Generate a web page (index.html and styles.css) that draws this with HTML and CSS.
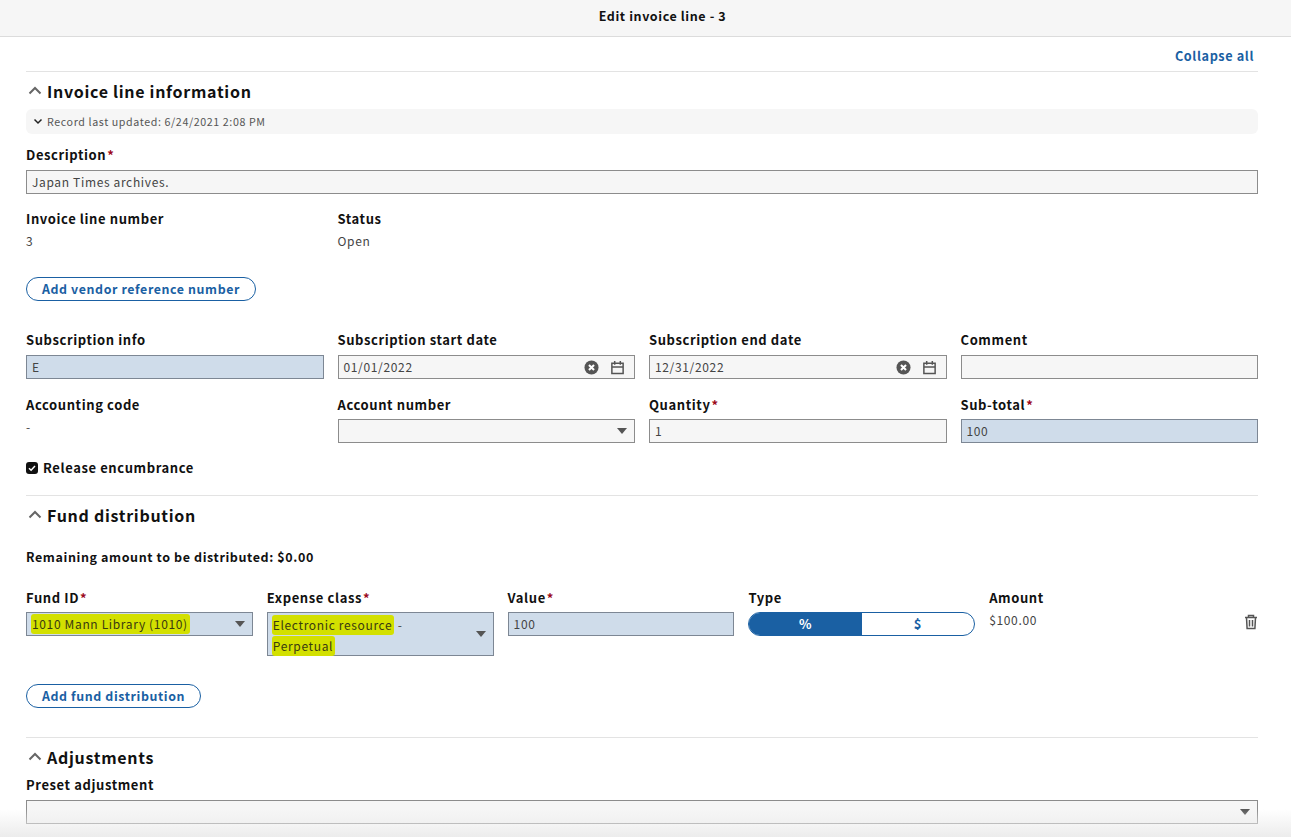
FILE: index.html
```html
<!DOCTYPE html>
<html lang="en">
<head>
<meta charset="utf-8">
<title>Edit invoice line - 3</title>
<link rel="stylesheet" href="styles.css">
</head>
<body>
<header class="topbar">Edit invoice line - 3</header>
<main class="content">
  <div class="collapse-row"><a class="link">Collapse all</a></div>

  <section class="section first">
    <h2 class="sec-title"><svg class="chev" viewBox="0 0 14 9"><path d="M1.500 7.500 7 2l5.500 5.500"/></svg>Invoice line information</h2>
    <div class="meta"><svg class="meta-chev" viewBox="0 0 10 7"><path d="M1.500 1.500 5 5l3.500-3.500"/></svg>Record last updated: 6/24/2021 2:08 PM</div>
    <div class="field desc">
      <label class="lbl">Description<span class="req">*</span></label>
      <div class="input">Japan Times archives.</div>
    </div>
    <div class="grid4 info-row">
      <div class="field"><label class="lbl">Invoice line number</label><div class="value">3</div></div>
      <div class="field"><label class="lbl">Status</label><div class="value">Open</div></div>
    </div>
    <button class="pill vendor">Add vendor reference number</button>
    <div class="grid4 sub-row">
      <div class="field"><label class="lbl">Subscription info</label><div class="input filled">E</div></div>
      <div class="field"><label class="lbl">Subscription start date</label>
        <div class="input date"><span class="grow">01/01/2022</span>
          <svg class="ic" viewBox="0 0 16 16"><circle cx="8" cy="8" r="7.500" fill="#555"/><path d="M5.300 5.300l5.400 5.400m0-5.400l-5.400 5.400" stroke="#fff" stroke-width="2.200" fill="none"/></svg>
          <svg class="ic cal" viewBox="0 0 16 16"><path d="M2 3.500h12v11H2zM2 7.500h12M5 1v4M11 1v4" stroke="#555" stroke-width="1.600" fill="none"/></svg>
        </div></div>
      <div class="field"><label class="lbl">Subscription end date</label>
        <div class="input date"><span class="grow">12/31/2022</span>
          <svg class="ic" viewBox="0 0 16 16"><circle cx="8" cy="8" r="7.500" fill="#555"/><path d="M5.300 5.300l5.400 5.400m0-5.400l-5.400 5.400" stroke="#fff" stroke-width="2.200" fill="none"/></svg>
          <svg class="ic cal" viewBox="0 0 16 16"><path d="M2 3.500h12v11H2zM2 7.500h12M5 1v4M11 1v4" stroke="#555" stroke-width="1.600" fill="none"/></svg>
        </div></div>
      <div class="field"><label class="lbl">Comment</label><div class="input"></div></div>
    </div>
    <div class="grid4 acc-row">
      <div class="field"><label class="lbl">Accounting code</label><div class="value">-</div></div>
      <div class="field"><label class="lbl">Account number</label><div class="input select"><span class="grow"></span><i class="caret"></i></div></div>
      <div class="field"><label class="lbl">Quantity<span class="req">*</span></label><div class="input">1</div></div>
      <div class="field"><label class="lbl">Sub-total<span class="req">*</span></label><div class="input filled">100</div></div>
    </div>
    <label class="check"><span class="box"><svg viewBox="0 0 12 12"><path d="M3 6.200 5.100 8.200 9 3.900"/></svg></span>Release encumbrance</label>
  </section>

  <section class="section fund">
    <h2 class="sec-title"><svg class="chev" viewBox="0 0 14 9"><path d="M1.500 7.500 7 2l5.500 5.500"/></svg>Fund distribution</h2>
    <p class="remain">Remaining amount to be distributed: $0.00</p>
    <div class="fund-row">
      <div class="field"><label class="lbl">Fund ID<span class="req">*</span></label>
        <div class="input filled select"><span class="grow"><mark class="hl">1010 Mann Library (1010)</mark></span><i class="caret"></i></div></div>
      <div class="field"><label class="lbl">Expense class<span class="req">*</span></label>
        <div class="input filled select tall"><span class="grow"><mark class="hl">Electronic resource</mark> -<br><mark class="hl">Perpetual</mark></span><i class="caret"></i></div></div>
      <div class="field"><label class="lbl">Value<span class="req">*</span></label><div class="input filled">100</div></div>
      <div class="field"><label class="lbl">Type</label>
        <div class="toggle"><span class="opt on">%</span><span class="opt">$</span></div></div>
      <div class="field"><label class="lbl">Amount</label><div class="value amount">$100.00</div></div>
      <svg class="trash" viewBox="0 0 14 16"><path d="M1 3.500h12M4.500 3.500V1.500h5v2M2.500 3.500l.6 11h7.800l.6-11M5.500 6v6.500M8.500 6v6.500" stroke="#555" stroke-width="1.500" fill="none"/></svg>
    </div>
    <button class="pill add-fund">Add fund distribution</button>
  </section>

  <section class="section adjust">
    <h2 class="sec-title"><svg class="chev" viewBox="0 0 14 9"><path d="M1.500 7.500 7 2l5.500 5.500"/></svg>Adjustments</h2>
    <div class="field preset"><label class="lbl">Preset adjustment</label><div class="input select"><span class="grow"></span><i class="caret"></i></div></div>
  </section>
</main>
<div class="bottom-fade"></div>
</body>
</html>
```
FILE: styles.css
```css
* { box-sizing: border-box; }
html, body { margin: 0; height: 837px; overflow: hidden; }
body {
  position: relative;
  background: #fff;
  color: #222;
  font-family: "Noto Sans CJK JP", "Noto Sans", sans-serif;
  font-size: 13px;
  line-height: 20px;
  letter-spacing: 0.6px;
}
.topbar {
  height: 37px;
  background: #f6f6f6;
  border-bottom: 1px solid #dcdcdc;
  padding-left: 34px;
  text-align: center;
  font-weight: 700;
  font-size: 12.500px;
  line-height: 31px;
  color: #111;
}
.content { padding: 0 33px 0 26px; }
.collapse-row { height: 34px; padding-top: 9px; text-align: right; padding-right: 4px; }
.link { color: #1a60a3; font-weight: 700; font-size: 12.700px; }
.section { border-top: 1px solid #e3e3e3; }
.sec-title {
  margin: 0;
  height: 37px;
  display: flex;
  align-items: center;
  font-size: 16px;
  line-height: 20px;
  letter-spacing: 0.700px;
  font-weight: 700;
  color: #111;
}
.chev { width: 14px; height: 9px; margin-right: 5px; margin-left: 2px; fill: none; stroke: #666; stroke-width: 2; }
.meta {
  height: 25px;
  background: #f6f6f6;
  border-radius: 6px;
  display: flex;
  align-items: center;
  padding-left: 7px;
  font-size: 10.700px;
  color: #555;
}
.meta-chev { width: 10px; height: 7px; margin-right: 4px; fill: none; stroke: #222; stroke-width: 1.500; }
.field { min-width: 0; }
.lbl { display: block; font-weight: 700; color: #111; font-size: 13px; line-height: 20px; }
.req { color: #9c0a1c; margin-left: 1px; }
.input {
  height: 24px;
  border: 1px solid #8c8c8c;
  background: #f6f6f6;
  margin-top: 5px;
  padding: 0 5px;
  font-size: 12px;
  letter-spacing: 0.650px;
  line-height: 22px;
  color: #444;
  display: flex;
  align-items: center;
}
.filled { background: #cfdcea; border-color: #7d8794; }
.grow { flex: 1; min-width: 0; }
.value { font-size: 12px; letter-spacing: 0.650px; line-height: 20px; color: #444; margin-top: 2px; }
.desc { margin-top: 11px; }
.grid4 { display: grid; grid-template-columns: repeat(4, 1fr); gap: 14px; }
.info-row { margin-top: 15px; }
.pill {
  display: block;
  height: 24px;
  border: 1px solid #1a60a3;
  border-radius: 12px;
  background: #fff;
  color: #1a60a3;
  font: inherit;
  font-weight: 700;
  font-size: 12.400px;
  line-height: 20px;
  letter-spacing: 0.6px;
  padding: 0 15px;
}
.vendor { margin-top: 26px; }
.sub-row { margin-top: 29px; }
.acc-row { margin-top: 16px; }
.acc-row .input { margin-top: 4px; }
.date { padding-right: 9px; }
.ic { width: 15px; height: 15px; flex: none; }
.cal { margin-left: 11px; }
.select { padding-right: 7px; }
.caret {
  flex: none;
  width: 0;
  height: 0;
  border-left: 5.500px solid transparent;
  border-right: 5.500px solid transparent;
  border-top: 6px solid #555;
}
.check {
  margin-top: 15px;
  height: 20px;
  display: flex;
  align-items: center;
  font-weight: 700;
  color: #111;
  font-size: 13px;
}
.box {
  width: 12px;
  height: 12px;
  background: #111;
  border-radius: 3px;
  margin-right: 5px;
  display: flex;
}
.box path { fill: none; stroke: #fff; stroke-width: 1.500; }
.fund { margin-top: 17px; }
.remain { margin: 14px 0 0; font-weight: 700; font-size: 12.500px; color: #111; line-height: 20px; }
.fund-row {
  margin-top: 21px;
  display: grid;
  grid-template-columns: repeat(4, 226.800px) 1fr 14px;
  column-gap: 14px;
  position: relative;
}
.tall { height: 44px; }
.fund-row .input { margin-top: 4px; }
.hl {
  display: inline-block;
  height: 20px;
  line-height: 20px;
  background: #d3e000;
  color: #3a3a10;
  padding: 0 2px 0 1px;
  margin-left: -1px;
  border-radius: 3px;
}
.tall .grow { line-height: 21px; margin-top: 1px; }
.toggle {
  margin-top: 4px;
  height: 24px;
  border: 1px solid #1a60a3;
  border-radius: 12px;
  overflow: hidden;
  display: flex;
}
.opt {
  flex: 1;
  text-align: center;
  font-weight: 700;
  font-size: 13px;
  line-height: 22px;
  color: #1a60a3;
}
.on { background: #1a60a3; color: #fff; }
.trash { width: 14px; height: 16px; margin-top: 26px; }
.add-fund { margin-top: 28px; }
.adjust { margin-top: 29px; }
.preset { margin-top: 0; }
.preset .input { margin-top: 5px; }
.bottom-fade {
  position: absolute;
  left: 0;
  right: 0;
  bottom: 0;
  height: 28px;
  background: linear-gradient(to bottom, rgba(235,235,235,0), #ececec);
  pointer-events: none;
}
```
